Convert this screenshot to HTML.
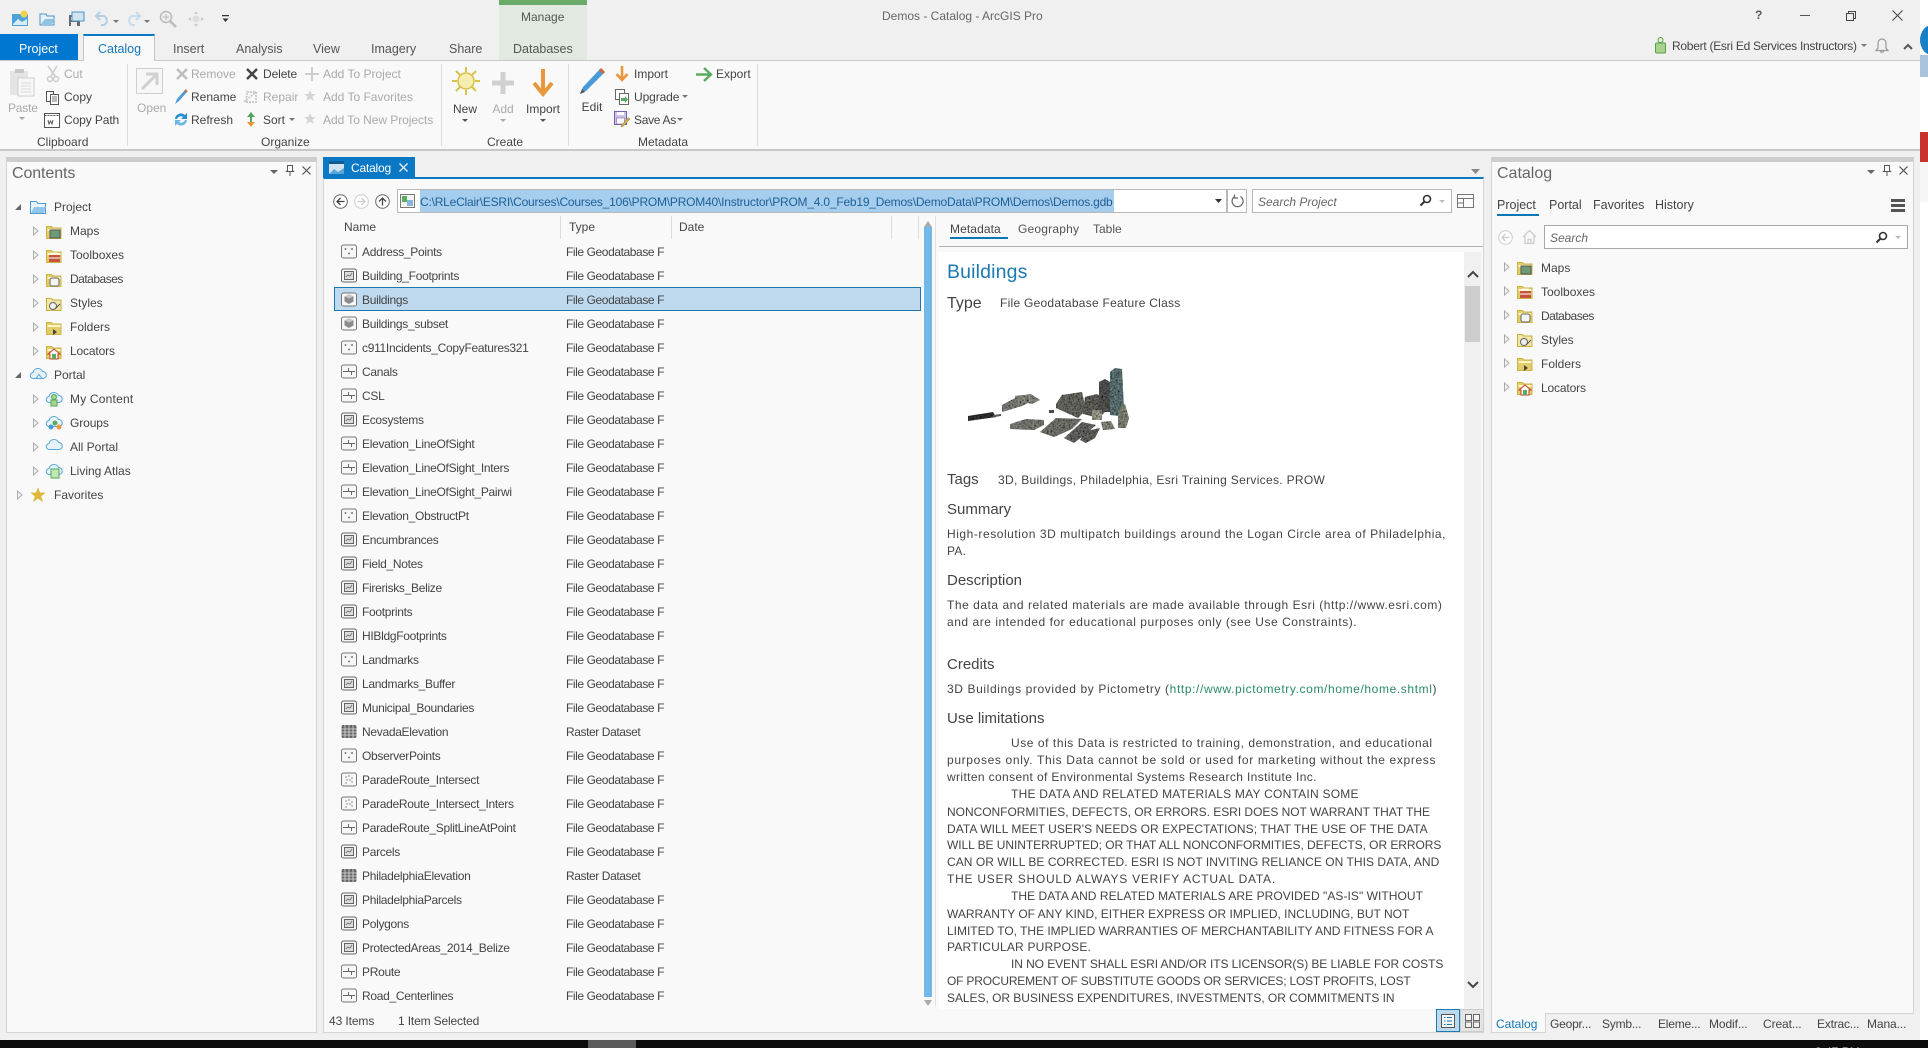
<!DOCTYPE html>
<html><head><meta charset="utf-8"><title>Demos - Catalog - ArcGIS Pro</title>
<style>
html,body{margin:0;padding:0;width:1928px;height:1048px;overflow:hidden;background:#fff}
body{position:relative;font-family:"Liberation Sans",sans-serif;font-size:12px;color:#444}
div,span,svg{box-sizing:border-box}
.a{position:absolute}
.t{position:absolute;white-space:nowrap;line-height:16px;height:16px}
svg{position:absolute;overflow:visible}
.d{color:#aaa}
.c{transform:translateX(-50%)}
.tab{font-size:12.5px;color:#555}
.h{font-size:16px;color:#666;line-height:20px;height:20px}
.m{font-size:12px;color:#444}
.mh{font-size:15px;color:#444;line-height:20px;height:20px}
.row{position:absolute;left:334px;width:587px;height:24px}
.row svg{left:7px;top:4px}
.row .n{position:absolute;left:28px;top:4px;line-height:16px;white-space:nowrap;color:#444;letter-spacing:-.3px}
.row .y{position:absolute;left:232px;top:4px;line-height:16px;white-space:nowrap;color:#444;letter-spacing:-.41px}
.sep{position:absolute;width:1px;background:#dcdcdc}
.pane{position:absolute;background:#f9f9f9;border:1px solid #d4d4d4}
</style></head><body>
<svg width="0" height="0" style="left:0;top:0"><defs>
<filter id="tx" x="0" y="0" width="100%" height="100%"><feTurbulence type="fractalNoise" baseFrequency=".55" numOctaves="2" seed="4"/><feColorMatrix values="0 0 0 0 0 0 0 0 0 0 0 0 0 0 0 1.800 0 0 0 -.55"/><feComposite in2="SourceAlpha" operator="in"/><feMerge><feMergeNode in="SourceGraphic"/><feMergeNode/></feMerge></filter>
<g id="pt"><rect x=".5" y="1" width="15" height="13" rx="2" fill="#f7f7f7" stroke="#777"/><circle cx="4.5" cy="5" r=".9" fill="#555"/><circle cx="11" cy="5" r=".9" fill="#555"/><circle cx="8" cy="9.5" r=".9" fill="#555"/></g>
<g id="dp"><rect x=".5" y="1" width="15" height="13" rx="2" fill="#f7f7f7" stroke="#777"/><g fill="#777"><circle cx="5" cy="5" r=".7"/><circle cx="8" cy="4" r=".7"/><circle cx="11" cy="6" r=".7"/><circle cx="6" cy="8" r=".7"/><circle cx="9" cy="8" r=".7"/><circle cx="5" cy="11" r=".7"/><circle cx="11" cy="10" r=".7"/></g></g>
<g id="pg"><rect x=".5" y="1" width="15" height="13" rx="2" fill="#f7f7f7" stroke="#666"/><rect x="3.5" y="3.5" width="9" height="8" fill="#ddd" stroke="#666"/><path d="M5 9l2-2 2 1 2-3" stroke="#777" fill="none"/></g>
<g id="ln"><rect x=".5" y="1" width="15" height="13" rx="2" fill="#f7f7f7" stroke="#777"/><path d="M2 7.500h12M7.500 4v3.500M10.500 7.500v3.500" stroke="#666" fill="none"/></g>
<g id="mp"><rect x=".5" y="1" width="15" height="13" rx="2" fill="#f7f7f7" stroke="#777"/><path d="M3.500 4.500L8 2.500l4.500 2v5L8 12l-4.500-2.500z" fill="#8a8a8a"/><path d="M3.500 4.500L8 6.500l4.500-2L8 2.500z" fill="#c4c4c4"/></g>
<g id="rs"><rect x=".5" y="1" width="15" height="13" rx="2" fill="#666"/><path d="M.5 5h15M.5 8h15M.5 11h15M4 1v13M8 1v13M12 1v13" stroke="#ddd" stroke-width=".8"/></g>
<g id="tri"><path d="M.5 0L5 4 .5 8z" fill="#f4f4f4" stroke="#aaa"/></g>
<g id="trd"><path d="M6 0v6H0z" fill="#666"/></g>
<g id="fd"><path d="M.5 2.500h5l1.500 1.500h8v10.500H.5z" fill="#e2cd68" stroke="#cdb44a"/><rect x="1.500" y="5" width="13" height="2" fill="#fff6cc"/></g>
<g id="mg"><circle cx="8" cy="5" r="3.500" fill="none" stroke="#333" stroke-width="1.600"/><path d="M5.500 7.500L1.500 11.500" stroke="#333" stroke-width="2"/></g>
<g id="cl"><path d="M3.500 11.500a3 3 0 01-.5-6 5 5 0 019.500-1A3.500 3.500 0 0113 11.500z" fill="#e6f3fb" stroke="#55a7d8"/></g>
<g id="str"><path d="M6 0l1.600 4h4.200L8.400 6.700l1.300 4.300L6 8.500 2.300 11l1.300-4.300L.2 4h4.200z"/></g>
</defs></svg>

<!-- backgrounds -->
<div class="a" style="left:0;top:0;width:1920px;height:1040px;background:#f0f0f0"></div>
<div class="a" style="left:1920px;top:55px;width:8px;height:22px;background:#a9c3dd"></div>
<div class="a" style="left:1920px;top:132px;width:8px;height:30px;background:#c8322c"></div>
<div class="a" style="left:1920px;top:162px;width:8px;height:40px;background:#f6f6f6"></div>
<div class="a" style="left:1920px;top:25px;width:8px;height:30px;overflow:hidden"><div class="a" style="left:0;top:0;width:24px;height:30px;border-radius:50%;background:#1b7fc4"></div></div>
<div class="a" style="left:0;top:1040px;width:1928px;height:8px;background:#0c0c0c;overflow:hidden"><div class="a" style="left:588px;top:0;width:48px;height:8px;background:#5a5a5a"></div><div class="t" style="left:1815px;top:4px;color:#eee;font-size:12px">3:47 PM</div></div>

<!-- title bar -->
<svg style="left:11px;top:10px" width="18" height="18"><path d="M1 4h16v12H1z" fill="#4da3d8"/><path d="M2 14l5-5 4 3 5-3v6H2z" fill="#d9edf8"/><circle cx="13" cy="4" r="3.500" fill="#f0d34a"/></svg>
<svg style="left:39px;top:11px" width="17" height="16"><path d="M1 3h6l1 2h7v9H1z" fill="#e8f2f9" stroke="#4a93c8"/><path d="M2 13l4-5h10l-3 5z" fill="#8fc3e5"/></svg>
<svg style="left:68px;top:10px" width="17" height="17"><rect x="1" y="5" width="11" height="11" fill="#6a6a6a"/><rect x="3" y="7" width="7" height="3" fill="#fff"/><rect x="4" y="2" width="12" height="9" fill="#cfe3f1" stroke="#4a93c8"/><rect x="3" y="12" width="6" height="4" fill="#eee"/></svg>
<svg style="left:95px;top:11px" width="16" height="15"><path d="M5 1L1 5l4 4M2 5h7a5 5 0 010 9H6" fill="none" stroke="#b3cfe4" stroke-width="2"/></svg>
<svg style="left:113px;top:20px" width="6" height="4"><path d="M0 0h6L3 3z" fill="#777"/></svg>
<svg style="left:125px;top:11px" width="16" height="15"><path d="M11 1l4 4-4 4M14 5H7a5 5 0 000 9h3" fill="none" stroke="#c5dcec" stroke-width="2"/></svg>
<svg style="left:144px;top:20px" width="6" height="4"><path d="M0 0h6L3 3z" fill="#777"/></svg>
<svg style="left:159px;top:10px" width="18" height="18"><circle cx="7" cy="7" r="5.500" fill="#eee" stroke="#bbb" stroke-width="1.500"/><path d="M11 11l6 6" stroke="#bbb" stroke-width="2.500"/><path d="M4 7h6M7 4v6" stroke="#bbb"/></svg>
<svg style="left:188px;top:11px" width="16" height="16"><circle cx="8" cy="8" r="3.500" fill="#ddd"/><path d="M8 0l2 3H6zM8 16l2-3H6zM0 8l3-2v4zM16 8l-3-2v4z" fill="#ccc"/></svg>
<svg style="left:222px;top:15px" width="7" height="8"><path d="M0 0h7v1.300H0zM.5 3.500h6L3.500 7z" fill="#333"/></svg>
<div class="t" style="left:882px;top:8px;color:#666;font-size:12px">Demos - Catalog - ArcGIS Pro</div>
<div class="t" style="left:1755px;top:7px;font-weight:bold;color:#555">?</div>
<div class="a" style="left:1800px;top:15px;width:10px;height:1px;background:#555"></div>
<svg style="left:1846px;top:11px" width="10" height="10"><path d="M.5 2.500h7v7h-7zM2.500 2.500V.5h7v7h-2" fill="none" stroke="#444"/></svg>
<svg style="left:1892px;top:10px" width="11" height="11"><path d="M.5.5l10 10M10.500.5l-10 10" stroke="#444"/></svg>

<!-- tabs -->
<div class="a" style="left:0;top:34px;width:78px;height:26px;background:#0078d2"></div>
<div class="t tab" style="left:19px;top:41px;color:#fff">Project</div>
<div class="a" style="left:83px;top:34px;width:72px;height:27px;background:#f9f9f9;border:1px solid #c4c4c4;border-top:2px solid #0a78c4;border-bottom:0"></div>
<div class="t tab" style="left:98px;top:41px;color:#1576b8">Catalog</div>
<div class="t tab" style="left:173px;top:41px">Insert</div>
<div class="t tab" style="left:236px;top:41px">Analysis</div>
<div class="t tab" style="left:313px;top:41px">View</div>
<div class="t tab" style="left:371px;top:41px">Imagery</div>
<div class="t tab" style="left:449px;top:41px">Share</div>
<div class="a" style="left:499px;top:0;width:88px;height:60px;background:#e2e9e0;border-top:5px solid #6aab6a"></div>
<div class="t tab" style="left:521px;top:9px;font-size:12px">Manage</div>
<div class="t tab" style="left:513px;top:41px">Databases</div>
<svg style="left:1654px;top:37px" width="13" height="17"><rect x="1.500" y="6" width="10" height="10" rx="1" fill="#a7d38e" stroke="#5aa04a"/><circle cx="6.500" cy="3" r="2.500" fill="#e6f2dc" stroke="#5aa04a"/></svg>
<div class="t" style="left:1672px;top:38px;color:#444;letter-spacing:-.27px">Robert (Esri Ed Services Instructors)</div>
<svg style="left:1861px;top:44px" width="6" height="4"><path d="M0 0h6L3 3z" fill="#777"/></svg>
<svg style="left:1875px;top:38px" width="14" height="16"><path d="M7 1a4 4 0 00-4 4v5l-2 2.500h12L11 10V5a4 4 0 00-4-4zM5 14h4" fill="none" stroke="#999" stroke-width="1.200"/></svg>
<svg style="left:1903px;top:43px" width="10" height="7"><path d="M1 6l4-4 4 4" fill="none" stroke="#555" stroke-width="2"/></svg>

<!-- ribbon -->
<div class="a" style="left:0;top:60px;width:1920px;height:91px;background:#f9f9f9;border-top:1px solid #c8c8c8;border-bottom:2px solid #c8c8c8"></div>
<div class="a" style="left:84px;top:60px;width:70px;height:2px;background:#f9f9f9"></div>
<div class="sep" style="left:127px;top:64px;height:82px"></div>
<div class="sep" style="left:441px;top:64px;height:82px"></div>
<div class="sep" style="left:568px;top:64px;height:82px"></div>
<div class="sep" style="left:757px;top:64px;height:82px"></div>

<svg style="left:8px;top:65px" width="29" height="32"><path d="M2 6h18v24H2z" fill="#e4e4e4"/><path d="M7 4h9v4H7z" fill="#c8c8c8"/><path d="M10 13h16v18H10z" fill="#f7f7f7" stroke="#d0d0d0"/><path d="M13 18h10M13 21h10M13 24h10M13 27h10" stroke="#d8d8d8"/></svg>
<div class="t d" style="left:8px;top:100px;letter-spacing:-.2px">Paste</div>
<svg style="left:19px;top:117px" width="6" height="4"><path d="M0 0h6L3 3z" fill="#aaa"/></svg>
<svg style="left:46px;top:66px" width="14" height="17"><path d="M2 0l7 10M11 0L5 10" stroke="#ccc" stroke-width="1.600"/><circle cx="4" cy="13" r="2.500" fill="none" stroke="#ccc" stroke-width="1.500"/><circle cx="10" cy="13" r="2.500" fill="none" stroke="#ccc" stroke-width="1.500"/></svg>
<div class="t d" style="left:64px;top:66px">Cut</div>
<svg style="left:45px;top:89px" width="15" height="16"><path d="M1.500 2.500h7v10h-7z" fill="#fff" stroke="#555"/><path d="M5.500 5.500h8v10h-8z" fill="#fff" stroke="#555"/><path d="M7 8h5M7 10h5M7 12h5" stroke="#777"/></svg>
<div class="t" style="left:64px;top:89px">Copy</div>
<svg style="left:44px;top:112px" width="16" height="16"><path d="M.5 1.500h15v14H.5z" fill="#fff" stroke="#555"/><path d="M.5 3.500h15" stroke="#555" stroke-dasharray="2 1"/><path d="M4 8l1 4 1.500-3 1.500 3 1-4" fill="none" stroke="#555"/></svg>
<div class="t" style="left:64px;top:112px;letter-spacing:-.1px">Copy Path</div>
<div class="t" style="left:37px;top:134px">Clipboard</div>

<svg style="left:136px;top:68px" width="27" height="27"><path d="M.5.500h26v25H.5z" fill="#f7f7f7" stroke="#cfcfcf"/><path d="M6 21L20 7M10 6h11v11" fill="none" stroke="#d0d0d0" stroke-width="3"/></svg>
<div class="t d" style="left:137px;top:100px">Open</div>

<svg style="left:176px;top:68px" width="12" height="12"><path d="M1 1l10 10M11 1L1 11" stroke="#bdbdbd" stroke-width="2.400"/></svg>
<div class="t d" style="left:191px;top:66px">Remove</div>
<svg style="left:174px;top:89px" width="14" height="16"><path d="M1 15l2-5L11 1l2 2-8 9z" fill="#4a9ad8"/><path d="M11 1l2 2" stroke="#d4663c" stroke-width="2"/></svg>
<div class="t" style="left:191px;top:89px">Rename</div>
<svg style="left:173px;top:111px" width="16" height="17"><path d="M2 8a6 6 0 0110-4l2-2v6H8l2-2a4 4 0 00-6 2z" fill="#2a8fd0"/><path d="M14 9a6 6 0 01-10 4l-2 2V9h6l-2 2a4 4 0 006-2z" fill="#6fb8e6"/></svg>
<div class="t" style="left:191px;top:112px">Refresh</div>

<svg style="left:246px;top:68px" width="12" height="12"><path d="M1 1l10 10M11 1L1 11" stroke="#444" stroke-width="2.400"/></svg>
<div class="t" style="left:263px;top:66px;letter-spacing:-.1px">Delete</div>
<svg style="left:243px;top:89px" width="16" height="16"><path d="M1 13L13 3M4 3h9v10H3z" fill="none" stroke="#ccc" stroke-width="2" stroke-dasharray="2 1"/></svg>
<div class="t d" style="left:263px;top:89px">Repair</div>
<svg style="left:246px;top:111px" width="10" height="17"><path d="M5 1L1 6h3v5h2V6h3z" fill="#4fa85a"/><path d="M5 16L1 11h8z" fill="#e8973c"/></svg>
<div class="t" style="left:263px;top:112px">Sort</div>
<svg style="left:289px;top:118px" width="6" height="4"><path d="M0 0h6L3 3z" fill="#777"/></svg>

<svg style="left:305px;top:67px" width="14" height="14"><path d="M7 0v14M0 7h14" stroke="#cfcfcf" stroke-width="2"/></svg>
<div class="t d" style="left:323px;top:66px">Add To Project</div>
<svg style="left:304px;top:90px" width="14" height="14" fill="#d4d4d4"><use href="#str"/></svg>
<div class="t d" style="left:323px;top:89px">Add To Favorites</div>
<svg style="left:304px;top:113px" width="14" height="14" fill="#d4d4d4"><use href="#str"/></svg>
<div class="t d" style="left:323px;top:112px;letter-spacing:-.05px">Add To New Projects</div>
<div class="t" style="left:261px;top:134px">Organize</div>

<svg style="left:451px;top:66px" width="30" height="30"><circle cx="15" cy="15" r="8" fill="#f6edb0" stroke="#d8c24a" stroke-width="1.500"/><path d="M15 1v5M15 24v5M1 15h5M24 15h5M5 5l4 4M21 21l4 4M25 5l-4 4M9 21l-4 4" stroke="#d8c24a" stroke-width="2"/></svg>
<div class="t c" style="left:465px;top:101px">New</div>
<svg style="left:462px;top:119px" width="6" height="4"><path d="M0 0h6L3 3z" fill="#555"/></svg>
<svg style="left:492px;top:72px" width="22" height="22"><path d="M11 0v22M0 11h22" stroke="#d0d0d0" stroke-width="5"/></svg>
<div class="t c d" style="left:503px;top:101px">Add</div>
<svg style="left:500px;top:119px" width="6" height="4"><path d="M0 0h6L3 3z" fill="#aaa"/></svg>
<svg style="left:533px;top:69px" width="20" height="27"><path d="M10 0v24M1 14l9 11 9-11" fill="none" stroke="#e8973c" stroke-width="4"/></svg>
<div class="t c" style="left:543px;top:101px">Import</div>
<svg style="left:540px;top:119px" width="6" height="4"><path d="M0 0h6L3 3z" fill="#555"/></svg>
<div class="t c" style="left:505px;top:134px">Create</div>

<svg style="left:579px;top:67px" width="27" height="28"><path d="M1 27l3-7L21 2l4 4L7 24z" fill="#4a9ad8"/><path d="M21 2l4 4" stroke="#d4663c" stroke-width="3"/><path d="M1 27l2-5 3 3z" fill="#555"/></svg>
<div class="t c" style="left:592px;top:99px">Edit</div>
<svg style="left:615px;top:66px" width="14" height="16"><path d="M7 0v13M1.500 8L7 14l5.500-6" fill="none" stroke="#e8973c" stroke-width="2.600"/></svg>
<div class="t" style="left:634px;top:66px">Import</div>
<svg style="left:614px;top:88px" width="16" height="17"><path d="M1.500 1.500h9v10h-9z" fill="#fff" stroke="#666"/><path d="M5.500 5.500h9v11h-9z" fill="#fff" stroke="#666"/><path d="M7 10h4V8l3 3.500-3 3.500v-2H7z" fill="#5aaa60"/></svg>
<div class="t" style="left:634px;top:89px;letter-spacing:-.1px">Upgrade</div>
<svg style="left:682px;top:95px" width="6" height="4"><path d="M0 0h6L3 3z" fill="#777"/></svg>
<svg style="left:614px;top:111px" width="17" height="17"><path d="M.5.500h12v13H.5z" fill="#cfc4e6" stroke="#7a5fb4"/><rect x="2.500" y="7" width="8" height="6" fill="#fff" stroke="#7a5fb4" stroke-width=".6"/><rect x="3" y="1" width="7" height="3" fill="#fff"/><path d="M7 16l2.500-1 6.500-7-1.500-1.500-6.500 7z" fill="#d4b03c" stroke="#8a7a30" stroke-width=".5"/></svg>
<div class="t" style="left:634px;top:112px;letter-spacing:-.3px">Save As</div>
<svg style="left:677px;top:118px" width="6" height="4"><path d="M0 0h6L3 3z" fill="#777"/></svg>
<svg style="left:696px;top:67px" width="16" height="15"><path d="M0 7.500h14M8 1l7 6.500L8 14" fill="none" stroke="#5aaa60" stroke-width="2.400"/></svg>
<div class="t" style="left:716px;top:66px">Export</div>
<div class="t" style="left:638px;top:134px">Metadata</div>

<!-- Contents pane -->
<div class="pane" style="left:6px;top:157px;width:311px;height:876px;border-top:5px solid #cdcdcd"></div>
<div class="t h" style="left:12px;top:164px;letter-spacing:-.1px">Contents</div>
<svg style="left:270px;top:170px" width="8" height="4"><path d="M0 0h8L4 4z" fill="#666"/></svg>
<svg style="left:286px;top:165px" width="8" height="11"><path d="M1.500.5h5v5l1 1H.5l1-1zM4 7v4" fill="none" stroke="#555"/></svg>
<svg style="left:302px;top:166px" width="9" height="9"><path d="M.5.500l8 8M8.500.500l-8 8" stroke="#555" stroke-width="1.200"/></svg>

<svg style="left:15px;top:204px" width="6" height="6"><use href="#trd"/></svg>
<svg style="left:30px;top:199px" width="16" height="15"><path d="M.5 2.500h6l1.500 2h7.500v10H.5z" fill="#eaf4fb" stroke="#4a9ad8"/><path d="M1 14l3-6h12l-2 6z" fill="#8fc6ea"/></svg>
<div class="t" style="left:54px;top:199px">Project</div>
<svg style="left:33px;top:227px" width="6" height="8"><use href="#tri"/></svg>
<svg style="left:46px;top:224px" width="16" height="15"><use href="#fd"/><rect x="4" y="6" width="10" height="8" fill="#6a9a78" stroke="#555"/></svg>
<div class="t" style="left:70px;top:223px">Maps</div>
<svg style="left:33px;top:251px" width="6" height="8"><use href="#tri"/></svg>
<svg style="left:46px;top:248px" width="16" height="15"><use href="#fd"/><rect x="3" y="7" width="11" height="7" fill="#c4553a"/><path d="M6 7V5h5v2M3 10h11" stroke="#fff" fill="none"/></svg>
<div class="t" style="left:70px;top:247px">Toolboxes</div>
<svg style="left:33px;top:275px" width="6" height="8"><use href="#tri"/></svg>
<svg style="left:46px;top:272px" width="16" height="15"><use href="#fd"/><rect x="4" y="6" width="9" height="8" rx="2" fill="#f4f4f4" stroke="#666"/></svg>
<div class="t" style="left:70px;top:271px;letter-spacing:-.5px">Databases</div>
<svg style="left:33px;top:299px" width="6" height="8"><use href="#tri"/></svg>
<svg style="left:46px;top:296px" width="16" height="15"><path d="M.5 2.500h5l1.500 1.500h8v10.500H.5z" fill="#f0e6a8" stroke="#c8ae3c"/><circle cx="7" cy="10" r="3.500" fill="#eee" stroke="#666"/><path d="M9 13l5-5" stroke="#555"/></svg>
<div class="t" style="left:70px;top:295px">Styles</div>
<svg style="left:33px;top:323px" width="6" height="8"><use href="#tri"/></svg>
<svg style="left:46px;top:320px" width="16" height="15"><use href="#fd"/><path d="M7 9l4 3-4 3z" fill="#444"/></svg>
<div class="t" style="left:70px;top:319px">Folders</div>
<svg style="left:33px;top:347px" width="6" height="8"><use href="#tri"/></svg>
<svg style="left:46px;top:344px" width="16" height="15"><use href="#fd"/><path d="M2 10l6-5 6 5h-2v5H4v-5z" fill="#f8f8f8" stroke="#c4402a"/><rect x="6" y="10" width="4" height="5" fill="#5aaa60"/></svg>
<div class="t" style="left:70px;top:343px;letter-spacing:-.15px">Locators</div>
<svg style="left:15px;top:372px" width="6" height="6"><use href="#trd"/></svg>
<svg style="left:30px;top:367px" width="16" height="15"><use href="#cl"/><path d="M6 11.500l3-4 3 4" fill="none" stroke="#55a7d8"/></svg>
<div class="t" style="left:54px;top:367px">Portal</div>
<svg style="left:33px;top:395px" width="6" height="8"><use href="#tri"/></svg>
<svg style="left:46px;top:391px" width="16" height="16"><use href="#cl"/><circle cx="8" cy="6" r="2.500" fill="#a7d38e" stroke="#4fa85a"/><rect x="5" y="9" width="6" height="6" fill="#a7d38e" stroke="#4fa85a"/></svg>
<div class="t" style="left:70px;top:391px;letter-spacing:.2px">My Content</div>
<svg style="left:33px;top:419px" width="6" height="8"><use href="#tri"/></svg>
<svg style="left:46px;top:415px" width="16" height="16"><use href="#cl"/><circle cx="5" cy="12" r="2.500" fill="#4a9ad8"/><circle cx="9" cy="8" r="2.500" fill="#5aaa60"/><circle cx="13" cy="12" r="2.500" fill="#e8973c"/></svg>
<div class="t" style="left:70px;top:415px;letter-spacing:-.1px">Groups</div>
<svg style="left:33px;top:443px" width="6" height="8"><use href="#tri"/></svg>
<svg style="left:46px;top:438px" width="16" height="14"><use href="#cl"/></svg>
<div class="t" style="left:70px;top:439px">All Portal</div>
<svg style="left:33px;top:467px" width="6" height="8"><use href="#tri"/></svg>
<svg style="left:46px;top:463px" width="16" height="16"><use href="#cl"/><rect x="5" y="6" width="8" height="9" fill="#c6e4b4" stroke="#4fa85a"/></svg>
<div class="t" style="left:70px;top:463px">Living Atlas</div>
<svg style="left:17px;top:491px" width="6" height="8"><use href="#tri"/></svg>
<svg style="left:30px;top:487px" width="16" height="16" viewBox="0 0 12 11.500" fill="#dcb83c"><use href="#str"/></svg>
<div class="t" style="left:54px;top:487px">Favorites</div>

<!-- Catalog view -->
<div class="a" style="left:323px;top:177px;width:1161px;height:856px;background:#f9f9f9;border:1px solid #d4d4d4;border-top:2px solid #0a78c4"></div>
<div class="a" style="left:323px;top:157px;width:92px;height:21px;background:#0a78c4"></div>
<svg style="left:329px;top:161px" width="15" height="13"><rect width="15" height="13" fill="#cfe3f1"/><rect width="15" height="3" fill="#0d5c94"/><path d="M0 13l5-5 4 3 6-4v6z" fill="#5aa6d8"/></svg>
<div class="t" style="left:351px;top:160px;color:#fff;letter-spacing:-.2px">Catalog</div>
<svg style="left:399px;top:163px" width="9" height="9"><path d="M.5.500l8 8M8.500.500l-8 8" stroke="#e8f2f9" stroke-width="1.300"/></svg>
<svg style="left:1471px;top:169px" width="9" height="5"><path d="M0 0h9L4.500 5z" fill="#888"/></svg>

<svg style="left:333px;top:194px" width="15" height="15"><circle cx="7.500" cy="7.500" r="6.800" fill="#fff" stroke="#666"/><path d="M11.500 7.500h-7M7.500 4l-3.500 3.500L7.500 11" fill="none" stroke="#444" stroke-width="1.300"/></svg>
<svg style="left:354px;top:194px" width="15" height="15"><circle cx="7.500" cy="7.500" r="6.800" fill="#fff" stroke="#ccc"/><path d="M3.500 7.500h7M7.500 4l3.500 3.500L7.500 11" fill="none" stroke="#ccc" stroke-width="1.300"/></svg>
<svg style="left:375px;top:194px" width="15" height="15"><circle cx="7.500" cy="7.500" r="6.800" fill="#fff" stroke="#666"/><path d="M7.500 11.500v-7M4 7.500L7.500 4 11 7.500" fill="none" stroke="#444" stroke-width="1.300"/></svg>
<div class="a" style="left:397px;top:189px;width:830px;height:24px;background:#fff;border:1px solid #b8b8b8"></div>
<div class="a" style="left:1227px;top:189px;width:20px;height:24px;background:#fff;border:1px solid #b8b8b8"></div>
<svg style="left:400px;top:194px" width="15" height="14"><rect x=".5" y=".5" width="14" height="13" fill="#f4f4f4" stroke="#777"/><rect x="2" y="2" width="5" height="6" fill="#5aaa60"/><rect x="7" y="6" width="6" height="6" fill="#88b8d8"/></svg>
<div class="a" style="left:420px;top:190px;width:694px;height:22px;background:#a5cdee"></div>
<div class="t" style="left:420px;top:193px;color:#1f5f95;letter-spacing:-.21px;padding-top:1px">C:\RLeClair\ESRI\Courses\Courses_106\PROM\PROM40\Instructor\PROM_4.0_Feb19_Demos\DemoData\PROM\Demos\Demos.gdb</div>
<svg style="left:1215px;top:199px" width="7" height="4"><path d="M0 0h7L3.500 4z" fill="#333"/></svg>
<svg style="left:1231px;top:194px" width="13" height="14"><path d="M3 3a5.500 5.500 0 106.500-.5M3.500.5v3.500H7" fill="none" stroke="#666" stroke-width="1.200"/></svg>
<div class="a" style="left:1252px;top:189px;width:200px;height:24px;background:#fff;border:1px solid #b8b8b8"></div>
<div class="t" style="left:1258px;top:194px;font-style:italic;color:#666">Search Project</div>
<svg style="left:1419px;top:194px" width="13" height="13"><use href="#mg"/></svg>
<svg style="left:1439px;top:200px" width="6" height="3"><path d="M0 0h6L3 3z" fill="#bbb"/></svg>
<svg style="left:1457px;top:194px" width="17" height="14"><path d="M.5.500h16v13H.5zM.5 4.500h16M6.500 4.500v9M.5 9h6" fill="#fafafa" stroke="#777"/></svg>

<div class="t" style="left:344px;top:219px">Name</div>
<div class="t" style="left:569px;top:219px">Type</div>
<div class="t" style="left:679px;top:219px">Date</div>
<div class="sep" style="left:560px;top:216px;height:23px"></div>
<div class="sep" style="left:671px;top:216px;height:23px"></div>
<div class="sep" style="left:891px;top:216px;height:23px"></div>
<div class="sep" style="left:918px;top:216px;height:23px"></div>
<svg style="left:924px;top:221px" width="8" height="6"><path d="M0 6h8L4 0z" fill="#aaa"/></svg>
<div class="a" style="left:924px;top:227px;width:8px;height:770px;background:#73b8e6"></div>
<svg style="left:924px;top:1000px" width="8" height="6"><path d="M0 0h8L4 6z" fill="#aaa"/></svg>
<div class="a" style="left:935px;top:216px;width:1px;height:790px;background:#e2e2e2"></div>

<div class="a" style="left:334px;top:287px;width:587px;height:24px;background:#bfd9ee;border:1px solid #1e78b0"></div>

<div class="row" style="top:240px"><svg width="16" height="15"><use href="#pt"/></svg><span class="n">Address_Points</span><span class="y">File Geodatabase F</span></div>
<div class="row" style="top:264px"><svg width="16" height="15"><use href="#pg"/></svg><span class="n">Building_Footprints</span><span class="y">File Geodatabase F</span></div>
<div class="row" style="top:288px"><svg width="16" height="15"><use href="#mp"/></svg><span class="n">Buildings</span><span class="y">File Geodatabase F</span></div>
<div class="row" style="top:312px"><svg width="16" height="15"><use href="#mp"/></svg><span class="n">Buildings_subset</span><span class="y">File Geodatabase F</span></div>
<div class="row" style="top:336px"><svg width="16" height="15"><use href="#pt"/></svg><span class="n">c911Incidents_CopyFeatures321</span><span class="y">File Geodatabase F</span></div>
<div class="row" style="top:360px"><svg width="16" height="15"><use href="#ln"/></svg><span class="n">Canals</span><span class="y">File Geodatabase F</span></div>
<div class="row" style="top:384px"><svg width="16" height="15"><use href="#ln"/></svg><span class="n">CSL</span><span class="y">File Geodatabase F</span></div>
<div class="row" style="top:408px"><svg width="16" height="15"><use href="#pg"/></svg><span class="n">Ecosystems</span><span class="y">File Geodatabase F</span></div>
<div class="row" style="top:432px"><svg width="16" height="15"><use href="#ln"/></svg><span class="n">Elevation_LineOfSight</span><span class="y">File Geodatabase F</span></div>
<div class="row" style="top:456px"><svg width="16" height="15"><use href="#ln"/></svg><span class="n">Elevation_LineOfSight_Inters</span><span class="y">File Geodatabase F</span></div>
<div class="row" style="top:480px"><svg width="16" height="15"><use href="#ln"/></svg><span class="n">Elevation_LineOfSight_Pairwi</span><span class="y">File Geodatabase F</span></div>
<div class="row" style="top:504px"><svg width="16" height="15"><use href="#pt"/></svg><span class="n">Elevation_ObstructPt</span><span class="y">File Geodatabase F</span></div>
<div class="row" style="top:528px"><svg width="16" height="15"><use href="#pg"/></svg><span class="n">Encumbrances</span><span class="y">File Geodatabase F</span></div>
<div class="row" style="top:552px"><svg width="16" height="15"><use href="#pg"/></svg><span class="n">Field_Notes</span><span class="y">File Geodatabase F</span></div>
<div class="row" style="top:576px"><svg width="16" height="15"><use href="#pg"/></svg><span class="n">Firerisks_Belize</span><span class="y">File Geodatabase F</span></div>
<div class="row" style="top:600px"><svg width="16" height="15"><use href="#pg"/></svg><span class="n">Footprints</span><span class="y">File Geodatabase F</span></div>
<div class="row" style="top:624px"><svg width="16" height="15"><use href="#pg"/></svg><span class="n">HIBldgFootprints</span><span class="y">File Geodatabase F</span></div>
<div class="row" style="top:648px"><svg width="16" height="15"><use href="#pt"/></svg><span class="n">Landmarks</span><span class="y">File Geodatabase F</span></div>
<div class="row" style="top:672px"><svg width="16" height="15"><use href="#pg"/></svg><span class="n">Landmarks_Buffer</span><span class="y">File Geodatabase F</span></div>
<div class="row" style="top:696px"><svg width="16" height="15"><use href="#pg"/></svg><span class="n">Municipal_Boundaries</span><span class="y">File Geodatabase F</span></div>
<div class="row" style="top:720px"><svg width="16" height="15"><use href="#rs"/></svg><span class="n">NevadaElevation</span><span class="y">Raster Dataset</span></div>
<div class="row" style="top:744px"><svg width="16" height="15"><use href="#pt"/></svg><span class="n">ObserverPoints</span><span class="y">File Geodatabase F</span></div>
<div class="row" style="top:768px"><svg width="16" height="15"><use href="#dp"/></svg><span class="n">ParadeRoute_Intersect</span><span class="y">File Geodatabase F</span></div>
<div class="row" style="top:792px"><svg width="16" height="15"><use href="#dp"/></svg><span class="n">ParadeRoute_Intersect_Inters</span><span class="y">File Geodatabase F</span></div>
<div class="row" style="top:816px"><svg width="16" height="15"><use href="#ln"/></svg><span class="n">ParadeRoute_SplitLineAtPoint</span><span class="y">File Geodatabase F</span></div>
<div class="row" style="top:840px"><svg width="16" height="15"><use href="#pg"/></svg><span class="n">Parcels</span><span class="y">File Geodatabase F</span></div>
<div class="row" style="top:864px"><svg width="16" height="15"><use href="#rs"/></svg><span class="n">PhiladelphiaElevation</span><span class="y">Raster Dataset</span></div>
<div class="row" style="top:888px"><svg width="16" height="15"><use href="#pg"/></svg><span class="n">PhiladelphiaParcels</span><span class="y">File Geodatabase F</span></div>
<div class="row" style="top:912px"><svg width="16" height="15"><use href="#pg"/></svg><span class="n">Polygons</span><span class="y">File Geodatabase F</span></div>
<div class="row" style="top:936px"><svg width="16" height="15"><use href="#pg"/></svg><span class="n">ProtectedAreas_2014_Belize</span><span class="y">File Geodatabase F</span></div>
<div class="row" style="top:960px"><svg width="16" height="15"><use href="#ln"/></svg><span class="n">PRoute</span><span class="y">File Geodatabase F</span></div>
<div class="row" style="top:984px"><svg width="16" height="15"><use href="#ln"/></svg><span class="n">Road_Centerlines</span><span class="y">File Geodatabase F</span></div>

<div class="t" style="left:329px;top:1013px;letter-spacing:-.1px">43 Items</div>
<div class="t" style="left:398px;top:1013px;letter-spacing:-.15px">1 Item Selected</div>
<div class="a" style="left:1436px;top:1009px;width:24px;height:23px;background:#bcd9ee;border:1px solid #1e78b0"></div>
<svg style="left:1441px;top:1014px" width="14" height="14"><path d="M.5.500h13v13H.5z" fill="#f4f8fb" stroke="#555"/><path d="M3 3.500h1.500M6 3.500h5M3 7h1.500M6 7h5M3 10.500h1.500M6 10.500h5" stroke="#1e78b0"/></svg>
<div class="a" style="left:1460px;top:1009px;width:24px;height:23px;background:#e4e4e4;border:1px solid #ccc"></div>
<svg style="left:1465px;top:1014px" width="15" height="14"><path d="M.5.500h6v6h-6zM8.500.500h6v6h-6zM.5 8h6v5.500h-6zM8.500 8h6v5.500h-6z" fill="#f4f4f4" stroke="#666"/></svg>

<!-- Details -->
<div class="t tab" style="left:950px;top:221px;color:#444;font-size:12px;letter-spacing:.1px">Metadata</div>
<div class="a" style="left:950px;top:237px;width:58px;height:2px;background:#0a78b8"></div>
<div class="t tab" style="left:1018px;top:221px;font-size:12px;letter-spacing:.2px">Geography</div>
<div class="t tab" style="left:1093px;top:221px;font-size:12px">Table</div>
<div class="a" style="left:939px;top:246px;width:544px;height:1px;background:#b4b4b4"></div>
<div class="a" style="left:939px;top:252px;width:525px;height:757px;background:#fff"></div>
<div class="a" style="left:1464px;top:252px;width:17px;height:757px;background:#f0f0f0"></div>
<svg style="left:1467px;top:270px" width="12" height="8"><path d="M1 7l5-5 5 5" fill="none" stroke="#444" stroke-width="2"/></svg>
<div class="a" style="left:1465px;top:286px;width:15px;height:56px;background:#cdcdcd"></div>
<svg style="left:1467px;top:981px" width="12" height="8"><path d="M1 1l5 5 5-5" fill="none" stroke="#444" stroke-width="2"/></svg>

<div class="t" style="left:947px;top:260px;font-size:19.500px;line-height:24px;height:24px;color:#1a79b0;letter-spacing:.15px">Buildings</div>
<div class="t mh" style="left:947px;top:294px;font-size:16px">Type</div>
<div class="t m" style="left:1000px;top:295px;letter-spacing:.26px">File Geodatabase Feature Class</div>

<svg style="left:960px;top:360px" width="180" height="90">
<g filter="url(#tx)">
<path d="M8 56l25-4 3 5-28 4z" fill="#383838"/>
<path d="M33 55l8-1v2l-8 1z" fill="#666"/>
<path d="M42 52l20-6 10-5 0-4h-15l-15 8z" fill="#8a8a84"/>
<path d="M55 40V36l16-2 9 6-8 4z" fill="#94948c"/>
<path d="M50 64l16-5 18 1 0 5-10 5-24-1z" fill="#878780"/>
<path d="M96 44l6-9 20-3 4 18-8 8-22-10z" fill="#72726c"/>
<path d="M89 50h5v3h-5z" fill="#666"/>
<path d="M125 37l12-3 6 4 4 12-8 8-16-4z" fill="#6c6862"/>
<path d="M139 22l6-3 5 3 2 30h-13z" fill="#5c5c5a"/>
<path d="M150 12l5-4 7 1 2 40-4 7-10-1z" fill="#668080"/>
<path d="M132 50h10v10h-10z" fill="#aaa99a"/>
<path d="M158 50l7-6 4 14-3 10-8 0z" fill="#8c9280"/>
<path d="M141 62l10-1 4 8-12 1z" fill="#939388"/>
<path d="M80 72l16-14 26 1-10 10-18 8z" fill="#7f7f78"/>
<path d="M104 78l18-16 14 3-14 12-8 6z" fill="#70706c"/>
<path d="M120 80l6-9 14-3-5 10-9 5z" fill="#6c6c68"/>
</g></svg>

<div class="t mh" style="left:947px;top:470px">Tags</div>
<div class="t m" style="left:998px;top:472px;letter-spacing:.31px">3D, Buildings, Philadelphia, Esri Training Services. PROW</div>
<div class="t mh" style="left:947px;top:500px">Summary</div>
<div class="t m" style="left:947px;top:526px;letter-spacing:.55px">High-resolution 3D multipatch buildings around the Logan Circle area of Philadelphia,</div>
<div class="t m" style="left:947px;top:543px;letter-spacing:.24px">PA.</div>
<div class="t mh" style="left:947px;top:571px">Description</div>
<div class="t m" style="left:947px;top:597px;letter-spacing:.53px">The data and related materials are made available through Esri (http://www.esri.com)</div>
<div class="t m" style="left:947px;top:614px;letter-spacing:.54px">and are intended for educational purposes only (see Use Constraints).</div>
<div class="t mh" style="left:947px;top:655px">Credits</div>
<div class="t m" style="left:947px;top:681px;letter-spacing:.61px">3D Buildings provided by Pictometry (<span style="color:#2c8a6a">http://www.pictometry.com/home/home.shtml</span>)</div>
<div class="t mh" style="left:947px;top:709px">Use limitations</div>
<div class="t m" style="left:1011px;top:735px;letter-spacing:.56px">Use of this Data is restricted to training, demonstration, and educational</div>
<div class="t m" style="left:947px;top:752px;letter-spacing:.65px">purposes only. This Data cannot be sold or used for marketing without the express</div>
<div class="t m" style="left:947px;top:769px;letter-spacing:.37px">written consent of Environmental Systems Research Institute Inc.</div>
<div class="t m" style="left:1011px;top:786px;letter-spacing:.24px">THE DATA AND RELATED MATERIALS MAY CONTAIN SOME</div>
<div class="t m" style="left:947px;top:804px;letter-spacing:-.03px">NONCONFORMITIES, DEFECTS, OR ERRORS. ESRI DOES NOT WARRANT THAT THE</div>
<div class="t m" style="left:947px;top:821px;letter-spacing:.06px">DATA WILL MEET USER'S NEEDS OR EXPECTATIONS; THAT THE USE OF THE DATA</div>
<div class="t m" style="left:947px;top:837px;letter-spacing:-.06px">WILL BE UNINTERRUPTED; OR THAT ALL NONCONFORMITIES, DEFECTS, OR ERRORS</div>
<div class="t m" style="left:947px;top:854px;letter-spacing:.04px">CAN OR WILL BE CORRECTED. ESRI IS NOT INVITING RELIANCE ON THIS DATA, AND</div>
<div class="t m" style="left:947px;top:871px;letter-spacing:.75px">THE USER SHOULD ALWAYS VERIFY ACTUAL DATA.</div>
<div class="t m" style="left:1011px;top:888px;letter-spacing:.05px">THE DATA AND RELATED MATERIALS ARE PROVIDED "AS-IS" WITHOUT</div>
<div class="t m" style="left:947px;top:906px;letter-spacing:0">WARRANTY OF ANY KIND, EITHER EXPRESS OR IMPLIED, INCLUDING, BUT NOT</div>
<div class="t m" style="left:947px;top:923px;letter-spacing:-.02px">LIMITED TO, THE IMPLIED WARRANTIES OF MERCHANTABILITY AND FITNESS FOR A</div>
<div class="t m" style="left:947px;top:939px;letter-spacing:.2px">PARTICULAR PURPOSE.</div>
<div class="t m" style="left:1011px;top:956px;letter-spacing:-.08px">IN NO EVENT SHALL ESRI AND/OR ITS LICENSOR(S) BE LIABLE FOR COSTS</div>
<div class="t m" style="left:947px;top:973px;letter-spacing:-.19px">OF PROCUREMENT OF SUBSTITUTE GOODS OR SERVICES; LOST PROFITS, LOST</div>
<div class="t m" style="left:947px;top:990px;letter-spacing:-.04px">SALES, OR BUSINESS EXPENDITURES, INVESTMENTS, OR COMMITMENTS IN</div>

<!-- Right Catalog pane -->
<div class="pane" style="left:1491px;top:157px;width:423px;height:857px;border-top:5px solid #cdcdcd"></div>
<div class="t h" style="left:1497px;top:164px">Catalog</div>
<svg style="left:1867px;top:170px" width="8" height="4"><path d="M0 0h8L4 4z" fill="#666"/></svg>
<svg style="left:1883px;top:165px" width="8" height="11"><path d="M1.500.5h5v5l1 1H.5l1-1zM4 7v4" fill="none" stroke="#555"/></svg>
<svg style="left:1899px;top:166px" width="9" height="9"><path d="M.5.500l8 8M8.500.500l-8 8" stroke="#555" stroke-width="1.200"/></svg>
<div class="t" style="left:1497px;top:197px;font-size:12.500px">Project</div>
<div class="a" style="left:1497px;top:214px;width:42px;height:2px;background:#0a78b8"></div>
<div class="t" style="left:1549px;top:197px;font-size:12.500px">Portal</div>
<div class="t" style="left:1593px;top:197px;font-size:12.500px">Favorites</div>
<div class="t" style="left:1655px;top:197px;font-size:12.500px">History</div>
<div class="a" style="left:1891px;top:199px;width:14px;height:3px;background:#555;box-shadow:0 5px 0 #555,0 10px 0 #555"></div>
<svg style="left:1498px;top:230px" width="15" height="15"><circle cx="7.500" cy="7.500" r="6.800" fill="#fff" stroke="#ccc"/><path d="M11.500 7.500h-7M7.500 4l-3.500 3.500L7.500 11" fill="none" stroke="#ccc" stroke-width="1.300"/></svg>
<svg style="left:1522px;top:229px" width="15" height="15"><path d="M1 8l6.500-6.500L14 8M3 7v7.500h9V7M6 14.500v-4h3v4" fill="none" stroke="#ccc" stroke-width="1.300"/></svg>
<div class="a" style="left:1544px;top:225px;width:364px;height:24px;background:#fff;border:1px solid #a8a8a8"></div>
<div class="t" style="left:1550px;top:230px;font-style:italic;color:#666">Search</div>
<svg style="left:1875px;top:231px" width="13" height="13"><use href="#mg"/></svg>
<svg style="left:1895px;top:236px" width="6" height="3"><path d="M0 0h6L3 3z" fill="#bbb"/></svg>

<svg style="left:1504px;top:263px" width="6" height="8"><use href="#tri"/></svg>
<svg style="left:1517px;top:260px" width="16" height="15"><use href="#fd"/><rect x="4" y="6" width="10" height="8" fill="#6a9a78" stroke="#555"/></svg>
<div class="t" style="left:1541px;top:260px">Maps</div>
<svg style="left:1504px;top:287px" width="6" height="8"><use href="#tri"/></svg>
<svg style="left:1517px;top:284px" width="16" height="15"><use href="#fd"/><rect x="3" y="7" width="11" height="7" fill="#c4553a"/><path d="M6 7V5h5v2M3 10h11" stroke="#fff" fill="none"/></svg>
<div class="t" style="left:1541px;top:284px">Toolboxes</div>
<svg style="left:1504px;top:311px" width="6" height="8"><use href="#tri"/></svg>
<svg style="left:1517px;top:308px" width="16" height="15"><use href="#fd"/><rect x="4" y="6" width="9" height="8" rx="2" fill="#f4f4f4" stroke="#666"/></svg>
<div class="t" style="left:1541px;top:308px;letter-spacing:-.5px">Databases</div>
<svg style="left:1504px;top:335px" width="6" height="8"><use href="#tri"/></svg>
<svg style="left:1517px;top:332px" width="16" height="15"><path d="M.5 2.500h5l1.500 1.500h8v10.500H.5z" fill="#f0e6a8" stroke="#c8ae3c"/><circle cx="7" cy="10" r="3.500" fill="#eee" stroke="#666"/><path d="M9 13l5-5" stroke="#555"/></svg>
<div class="t" style="left:1541px;top:332px">Styles</div>
<svg style="left:1504px;top:359px" width="6" height="8"><use href="#tri"/></svg>
<svg style="left:1517px;top:356px" width="16" height="15"><use href="#fd"/><path d="M7 9l4 3-4 3z" fill="#444"/></svg>
<div class="t" style="left:1541px;top:356px">Folders</div>
<svg style="left:1504px;top:383px" width="6" height="8"><use href="#tri"/></svg>
<svg style="left:1517px;top:380px" width="16" height="15"><use href="#fd"/><path d="M2 10l6-5 6 5h-2v5H4v-5z" fill="#f8f8f8" stroke="#c4402a"/><rect x="6" y="10" width="4" height="5" fill="#5aaa60"/></svg>
<div class="t" style="left:1541px;top:380px;letter-spacing:-.15px">Locators</div>

<div class="a" style="left:1491px;top:1013px;width:55px;height:20px;background:#f9f9f9;border:1px solid #d4d4d4;border-top:0"></div>
<div class="t" style="left:1496px;top:1016px;color:#1576b8">Catalog</div>
<div class="t" style="left:1550px;top:1016px;letter-spacing:-.2px">Geopr...</div>
<div class="t" style="left:1602px;top:1016px;letter-spacing:-.2px">Symb...</div>
<div class="t" style="left:1658px;top:1016px;letter-spacing:-.2px">Eleme...</div>
<div class="t" style="left:1709px;top:1016px;letter-spacing:-.1px">Modif...</div>
<div class="t" style="left:1763px;top:1016px;letter-spacing:-.1px">Creat...</div>
<div class="t" style="left:1817px;top:1016px;letter-spacing:-.2px">Extrac...</div>
<div class="t" style="left:1867px;top:1016px;letter-spacing:-.1px">Mana...</div>
</body></html>
